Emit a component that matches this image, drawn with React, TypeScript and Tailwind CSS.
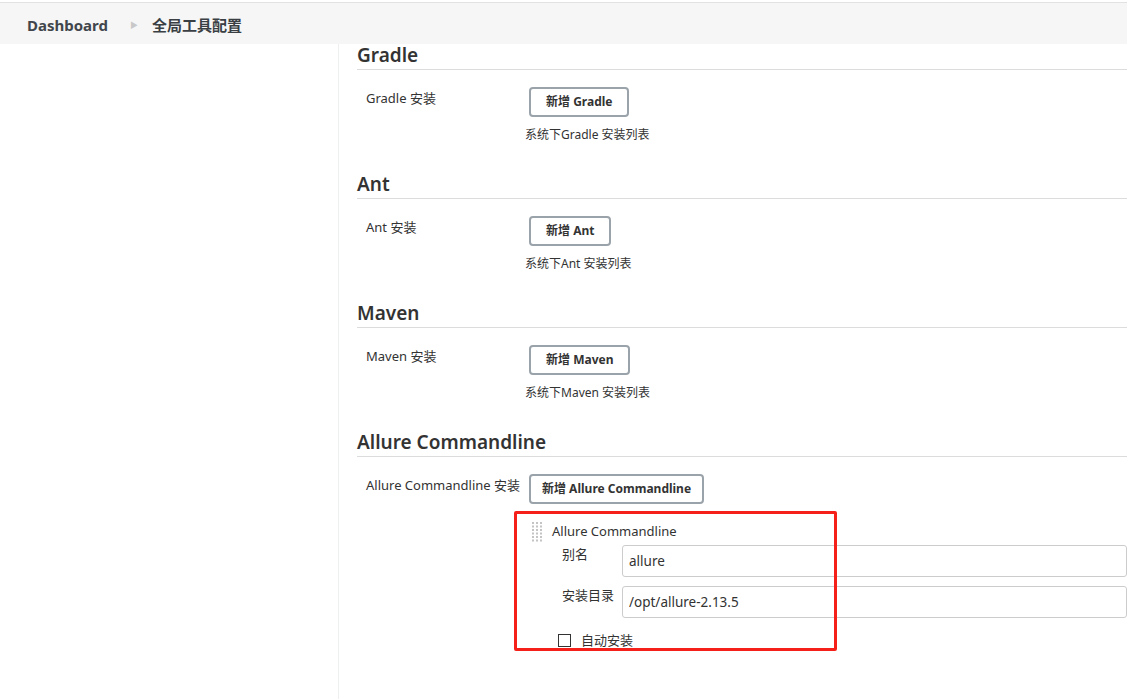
import { useState } from 'react';

const font = { fontFamily: '"Noto Sans", "Noto Sans CJK SC", sans-serif' };

function Heading({ title }: { title: string }) {
  return (
    <h2 className="text-[19px] leading-[22px] pb-[3px] font-semibold text-[#333] border-b border-[#dcdcdc]">{title}</h2>
  );
}

function Installer({ name }: { name: string }) {
  return (
    <div className="mb-[30px]">
      <Heading title={name} />
      <div className="flex pt-[17px]">
        <div className="w-[168px] pl-[9px] pt-[2px] text-[13px] text-[#333]">{name} 安装</div>
        <div className="flex flex-col">
          <button className="self-start h-[30px] px-[15px] border-2 border-[#9ba3aa] rounded-[4px] bg-white text-[12px] font-bold text-[#333] ml-[4px]">
            新增 {name}
          </button>
          <div className="mt-[10px] text-[12px] text-[#333] leading-[16px]">系统下{name} 安装列表</div>
        </div>
      </div>
    </div>
  );
}

function Handle() {
  const dots = [];
  for (let r = 0; r < 6; r++) {
    for (let c = 0; c < 3; c++) {
      dots.push(<rect key={`${r}-${c}`} x={c * 4} y={r * 3.5} width="2" height="2" fill="#c4c4c4" />);
    }
  }
  return (
    <svg width="12" height="20" viewBox="0 0 12 20">
      {dots}
    </svg>
  );
}

export default function App() {
  const [auto, setAuto] = useState(false);
  return (
    <div className="relative min-h-[699px] bg-white overflow-hidden" style={font}>
      <div className="h-[3px] bg-white border-b border-[#e2e2e2]" />
      <div className="h-[41px] bg-[#f6f6f6] flex items-center pl-[27px] pt-[3px] text-[15px] font-bold text-[#41464c]">
        <span>Dashboard</span>
        <span className="ml-[22px] mr-[14px] text-[#c8c8c8] text-[8px]">▶</span>
        <span className="text-[#3a3f44]">全局工具配置</span>
      </div>
      <div className="flex min-h-[655px]">
        <div className="w-[339px] shrink-0 border-r border-[#eef0f0]" />
        <div className="flex-1 pl-[18px]">
          <Installer name="Gradle" />
          <Installer name="Ant" />
          <Installer name="Maven" />
          <div>
            <Heading title="Allure Commandline" />
            <div className="flex pt-[17px]">
              <div className="w-[168px] pl-[9px] pt-[2px] text-[13px] text-[#333] whitespace-nowrap">Allure Commandline 安装</div>
              <div className="flex flex-col flex-1">
                <button className="self-start h-[30px] px-[11px] border-2 border-[#9ba3aa] rounded-[4px] bg-white text-[12px] font-bold text-[#333] ml-[4px]">
                  新增 Allure Commandline
                </button>
                <div className="mt-[18px] pl-[7px]">
                  <div className="flex items-center gap-[8px]">
                    <Handle />
                    <span className="text-[13px] text-[#333]">Allure Commandline</span>
                  </div>
                  <div className="flex mt-[3px]">
                    <div className="w-[90px] pl-[30px] text-[13px] text-[#333]">别名</div>
                    <input
                      defaultValue="allure"
                      className="flex-1 h-[32px] border border-[#ccc] rounded-[3px] px-[6px] text-[13.5px] text-[#333] outline-none"
                      style={font}
                    />
                  </div>
                  <div className="flex mt-[9px]">
                    <div className="w-[90px] pl-[30px] text-[13px] text-[#333]">安装目录</div>
                    <input
                      defaultValue="/opt/allure-2.13.5"
                      className="flex-1 h-[32px] border border-[#ccc] rounded-[3px] px-[6px] text-[13.5px] text-[#333] outline-none"
                      style={font}
                    />
                  </div>
                  <label className="flex items-center mt-[12px] pl-[26px] text-[13px] text-[#333]">
                    <input
                      type="checkbox"
                      checked={auto}
                      onChange={() => setAuto(!auto)}
                      className="w-[13px] h-[13px] appearance-none border border-[#333] bg-white mr-[10px]"
                    />
                    <span className="pt-[1px]">自动安装</span>
                  </label>
                </div>
              </div>
            </div>
          </div>
        </div>
      </div>
      <div className="absolute left-[514px] top-[511px] w-[323px] h-[140px] border-[3px] border-[#f5201a] rounded-[2px] pointer-events-none" />
    </div>
  );
}
